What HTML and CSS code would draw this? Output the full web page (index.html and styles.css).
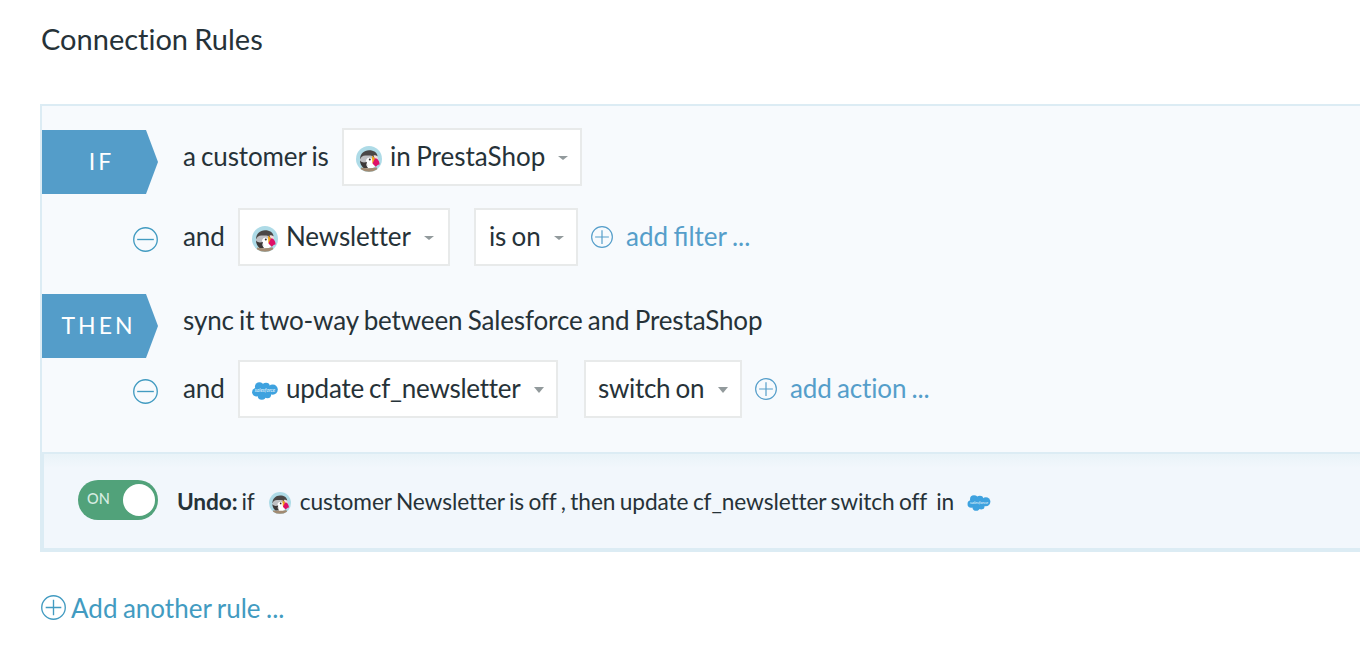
FILE: index.html
```
<!DOCTYPE html>
<html lang="en">
<head>
<meta charset="UTF-8" />
<meta name="viewport" content="width=device-width, initial-scale=1" />
<title>Connection Rules</title>
<link rel="stylesheet" href="styles.css">
</head>
<body>
  <svg class="sprite" aria-hidden="true">
    <symbol id="icon-plus" viewBox="0 0 24 24">
      <circle cx="12" cy="12" r="11.3" />
      <path d="M12 4.5v15M4.5 12h15" />
    </symbol>
    <symbol id="icon-minus" viewBox="0 0 24 24">
      <circle cx="12" cy="12" r="11.3" />
      <path d="M4 12h16" />
    </symbol>
    <symbol id="logo-prestashop" viewBox="0 0 26 26">
      <circle cx="13" cy="13" r="13" fill="#aedbe7" />
      <path d="M4 13C4 8 8 4.2 13 4.2c5 0 8 2.300 8.500 5.800L18 13l-6 1z" fill="#4a4746" />
      <path d="M4 14c.5-3 2.500-4.500 5.500-4.500 3 .3 6-.7 8 1.500v8l-4 2.500H8c-2-2-4-4-4-7.500z" fill="#bfc0c3" />
      <path d="M10 14.500c.5-2 2-3 4-3l3.500 2-.5 4 2 3-2.500 2H9.500l2-3z" fill="#fff" />
      <path d="M4 14.500c2 2.500 4.500 2 7 1.500l-1 3 2 3H7.500C5.500 20 4 17.500 4 14.500z" fill="#3d3938" />
      <circle cx="13.800" cy="13.500" r="1" fill="#302c2c" />
      <path d="M17.500 9.500c2.500-1 4.300.3 4.500 3.200l-3 .8z" fill="#f3dcd9" />
      <path d="M16 9.500l3 3-1.500 6-1.200-2z" fill="#f2a51b" />
      <path d="M19 12.300l2 .5c1.700 1.500 2.500 3.500 2.600 5.700-2-.3-2.400 1.200-3.800 2.300L16.500 17.500z" fill="#df1067" />
      <path d="M5 21.500q8 1.700 15.500-.3l.8 2Q13 28.500 4.800 23.200z" fill="#a28b72" />
    </symbol>
    <symbol id="logo-salesforce" viewBox="0 0 26 18">
      <g fill="#3ea2df">
        <circle cx="7.4" cy="4.8" r="4.5" />
        <circle cx="14" cy="4.7" r="3.9" />
        <circle cx="20.7" cy="7.6" r="5.1" />
        <circle cx="4.3" cy="10.2" r="4.2" />
        <circle cx="9.8" cy="13.7" r="4.1" />
        <circle cx="15.5" cy="12.6" r="3.7" />
        <path d="M5 4h12l4 8H5z" />
      </g>
      <text x="13" y="10.1" text-anchor="middle" class="logo-text">salesforce</text>
    </symbol>
  </svg>

  <main class="page">
    <h1>Connection Rules</h1>

    <section class="rule">
      <div class="rule-body">
        <div class="row">
          <div class="gutter gutter-tag"><span class="tag tag-if">IF</span></div>
          <span class="lead lead-long">a customer is</span>
          <button class="select select-source" type="button">
            <svg class="logo-ps"><use href="#logo-prestashop" /></svg>
            <span>in PrestaShop</span><i class="caret"></i>
          </button>
        </div>

        <div class="row">
          <div class="gutter"><svg class="icon"><use href="#icon-minus" /></svg></div>
          <span class="lead">and</span>
          <button class="select select-field" type="button">
            <svg class="logo-ps"><use href="#logo-prestashop" /></svg>
            <span>Newsletter</span><i class="caret"></i>
          </button>
          <button class="select select-state" type="button">
            <span>is on</span><i class="caret"></i>
          </button>
          <a class="add" href="#"><svg class="icon"><use href="#icon-plus" /></svg><span class="liga">add filter ...</span></a>
        </div>

        <div class="row row-then">
          <div class="gutter gutter-tag"><span class="tag">THEN</span></div>
          <span class="sentence">sync it two-way between Salesforce and PrestaShop</span>
        </div>

        <div class="row row-action">
          <div class="gutter"><svg class="icon"><use href="#icon-minus" /></svg></div>
          <span class="lead">and</span>
          <button class="select select-update" type="button">
            <svg class="logo-sf"><use href="#logo-salesforce" /></svg>
            <span>update cf_newsletter</span><i class="caret caret-tall"></i>
          </button>
          <button class="select select-switch" type="button">
            <span>switch on</span><i class="caret caret-tall"></i>
          </button>
          <a class="add" href="#"><svg class="icon"><use href="#icon-plus" /></svg><span>add action ...</span></a>
        </div>
      </div>

      <div class="undo">
        <div class="toggle"><span>ON</span><i class="knob"></i></div>
        <strong>Undo:</strong>
        <span class="undo-if">if</span>
        <svg class="logo-ps"><use href="#logo-prestashop" /></svg>
        <span class="undo-text">customer Newsletter is off , then update cf_newsletter switch off</span>
        <span class="undo-in">in</span>
        <svg class="logo-sf"><use href="#logo-salesforce" /></svg>
      </div>
    </section>

    <a class="add-rule" href="#"><svg class="icon"><use href="#icon-plus" /></svg>Add another rule ...</a>
  </main>
</body>
</html>
```
FILE: styles.css
```
*, *::before, *::after {
  box-sizing: border-box;
}
body {
  margin: 0;
  font-family: Lato, sans-serif;
  font-size: 26px;
  line-height: 32px;
  font-variant-ligatures: none;
  word-spacing: -1.2px;
  color: #263238;
  background: #fff;
  overflow: hidden;
}
svg {
  display: block;
  flex: none;
}
.sprite {
  display: none;
}
.page {
  padding: 21px 0 0 40px;
}
h1 {
  margin: 0 0 47px 1px;
  font-size: 29px;
  line-height: 36px;
  font-weight: 400;
}
a {
  color: #559eca;
  text-decoration: none;
}

/* Icons */
.icon {
  width: 25px;
  height: 25px;
  fill: none;
  stroke: #429bc1;
  stroke-width: 1.3;
}
.logo-ps {
  width: 26px;
  height: 26px;
}
.logo-sf {
  width: 26px;
  height: 18px;
}
.logo-text {
  font-size: 5px;
  font-style: italic;
  letter-spacing: 0;
  fill: #e6f5fc;
}

/* Rule box */
.rule {
  border: 2px solid #dcecf4;
  border-right: 0;
  border-bottom: 0;
  letter-spacing: -0.14px;
}
.rule-body {
  height: 346px;
  padding-top: 22px;
  background: #f7fafd;
}
.row {
  display: flex;
  align-items: center;
  height: 58px;
  margin-bottom: 22px;
  white-space: nowrap;
}
.row-then {
  margin: 26px 0 10px;
}
.row-action {
  margin-bottom: 0;
}
.gutter {
  width: 141px;
  flex: none;
  padding: 4px 0 0 90.5px;
}
.gutter-tag {
  align-self: flex-start;
  padding: 2px 0 0;
}
.tag {
  display: block;
  width: 116px;
  height: 64px;
  padding-right: 3px;
  background: #549dc9;
  clip-path: polygon(0 0, 104px 0, 100% 50%, 104px 100%, 0 100%);
  color: #fff;
  font-size: 23px;
  line-height: 62px;
  letter-spacing: 3px;
  text-align: center;
}
.tag-if {
  padding: 0 0 0 3px;
}
.lead,
.sentence {
  padding-bottom: 2px;
}
.lead {
  width: 55px;
}
.lead-long {
  width: 159px;
}

/* Dropdowns */
.select {
  display: flex;
  align-items: center;
  height: 58px;
  padding: 0 12px;
  border: 2px solid #e8eaea;
  background: #fff;
  color: inherit;
  font: inherit;
  font-variant-ligatures: none;
  letter-spacing: inherit;
  word-spacing: inherit;
}
.select span,
.add span {
  padding-bottom: 2px;
}
.select svg {
  margin: 4px 8px 0 0;
}
.caret {
  flex: none;
  width: 0;
  height: 0;
  margin: 2px 0 0 auto;
  border: 5px solid transparent;
  border-top: 4px solid #929a9c;
  border-bottom: 0;
}
.caret-tall {
  border-width: 6px 5px 0;
}
.select-source {
  width: 240px;
  letter-spacing: 0;
}
.select-field {
  width: 212px;
  padding-right: 14px;
  margin-right: 24px;
}
.select-state {
  width: 104px;
  padding-left: 13px;
}
.select-update {
  width: 320px;
  margin-right: 26px;
  letter-spacing: -0.25px;
}
.select-switch {
  width: 158px;
  letter-spacing: -0.3px;
}
.add {
  display: flex;
  align-items: center;
  margin-left: 12.5px;
}
.add .icon {
  width: 22px;
  height: 22px;
  margin-right: 13.5px;
  stroke: #559eca;
}
.liga {
  font-variant-ligatures: normal;
  letter-spacing: 0;
}

/* Undo strip */
.undo {
  display: flex;
  align-items: center;
  height: 100px;
  padding: 0 0 0 34px;
  border: solid #dcecf4;
  border-width: 2px 0 4px 2px;
  background: linear-gradient(#e9f3f8, #f2f7fc 14px);
  font-size: 22.7px;
  letter-spacing: -0.11px;
  white-space: nowrap;
}
.undo > span,
.undo > strong {
  padding-top: 2px;
}
.toggle {
  display: flex;
  align-items: center;
  justify-content: space-between;
  width: 80px;
  height: 40px;
  margin: -2px 19px 0 0;
  padding: 0 3px 2px 9px;
  border-radius: 20px;
  background: #51a27a;
  color: #d7ede1;
  font-size: 14.5px;
  font-weight: 500;
  letter-spacing: 0;
}
.knob {
  width: 32px;
  height: 32px;
  margin-top: 2px;
  border-radius: 50%;
  background: #fff;
}
.undo-if {
  margin: 0 14px 0 4px;
}
.undo .logo-ps {
  width: 22px;
  height: 22px;
  margin: 3px 9px 0 0;
}
.undo .logo-sf {
  width: 24px;
  height: 16px;
  margin: 3px 0 0 13px;
}
.undo-in {
  margin-left: 9px;
}

.add-rule {
  display: inline-flex;
  align-items: center;
  margin: 40px 0 0 1px;
  color: #429bc1;
}
.add-rule .icon {
  margin: -2px 5px 0 0;
}
```
